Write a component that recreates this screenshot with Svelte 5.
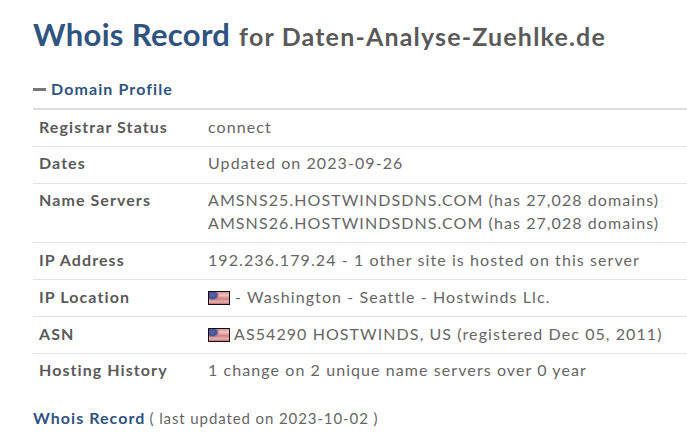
<script>
  const rows = [
    { k: 'Registrar Status', v: ['connect'] },
    { k: 'Dates', v: ['Updated on 2023-09-26'] },
    { k: 'Name Servers', v: ['AMSNS25.HOSTWINDSDNS.COM (has 27,028 domains)', 'AMSNS26.HOSTWINDSDNS.COM (has 27,028 domains)'] },
    { k: 'IP Address', v: ['192.236.179.24 - 1 other site is hosted on this server'] },
    { k: 'IP Location', v: ['- Washington - Seattle - Hostwinds Llc.'], flag: true, sp: true },
    { k: 'ASN', v: ['AS54290 HOSTWINDS, US (registered Dec 05, 2011)'], flag: true },
    { k: 'Hosting History', v: ['1 change on 2 unique name servers over 0 year'] }
  ];
</script>

<main class="page">
  <h1><span class="big">Whois Record</span> <span class="for">for Daten-Analyse-Zuehlke.de</span></h1>
  <h2><span class="minus"></span>Domain Profile</h2>
  <div class="table">
    {#each rows as r}
      <div class="row">
        <div class="key">{r.k}</div>
        <div class="val">
          {#each r.v as line}
            <div class="line">
              {#if r.flag}
                <svg class="flag" class:sp={r.sp} width="22" height="14" viewBox="0 0 22 14">
                  <defs>
                    <linearGradient id="st" x1="0" y1="0" x2="0" y2="1">
                      <stop offset="0" stop-color="#d98a8a"/><stop offset="0.3" stop-color="#eec4c0"/><stop offset="0.55" stop-color="#d67f80"/><stop offset="0.8" stop-color="#e7b0ae"/><stop offset="1" stop-color="#b85f64"/>
                    </linearGradient>
                    <radialGradient id="cn" cx="0.35" cy="0.4" r="0.7">
                      <stop offset="0" stop-color="#5a68b0"/><stop offset="0.6" stop-color="#4a4f90"/><stop offset="1" stop-color="#9a80a8" stop-opacity="0.2"/>
                    </radialGradient>
                  </defs>
                  <rect x="0.5" y="0.5" width="21" height="13" fill="url(#st)" stroke="#111"/>
                  <rect x="1" y="1" width="10" height="8" fill="url(#cn)"/>
                </svg>
              {/if}{line}
            </div>
          {/each}
        </div>
      </div>
    {/each}
  </div>
  <div class="foot"><span class="fk">Whois Record</span> <span class="fv">( last updated on 2023-10-02 )</span></div>
</main>

<style>
  :global(body) { margin: 0; background: #fff; overflow: hidden; }
  .page {
    font-family: Lato, sans-serif;
    color: #5a5a5a;
    padding: 16px 0 0 33px;
    height: 417px;
    box-sizing: content-box;
  }
  h1 { margin: 0; font-weight: 700; line-height: 36px; white-space: nowrap; }
  .big { font-size: 31px; color: #2f5480; letter-spacing: 0.33px; margin-right: 1px; }
  .for { font-size: 25px; color: #5a5a5a; letter-spacing: 1.18px; }
  h2 {
    margin: 25px 0 0;
    font-size: 16px;
    line-height: 20px;
    font-weight: 700;
    letter-spacing: 1.1px;
    color: #2f5480;
    display: flex;
    align-items: center;
  }
  .minus { width: 13px; height: 3px; background: #777; margin-right: 5px; }
  .table { border-top: 2px solid #ddd; margin-top: 9px; }
  .row {
    display: flex;
    border-bottom: 1px solid #e2e2e2;
    padding: 4.6px 0 8.2px 6px;
    font-size: 16px;
    line-height: 23px;
    letter-spacing: 1.08px;
  }
  .row:last-child { border-bottom: 0; }
  .key { width: 169px; flex: none; font-weight: 700; color: #5a5a5a; }
  .val { color: #666; white-space: nowrap; }
  .flag { vertical-align: -2px; margin-right: 4px; }
  .flag.sp { margin-right: 5px; }
  .foot { margin-top: 19px; line-height: 20px; white-space: nowrap; }
  .fv { font-size: 15px; letter-spacing: 0.9px; color: #666; }
  .fk { font-size: 16px; letter-spacing: 1.05px; font-weight: 700; color: #2f5480; }
</style>
